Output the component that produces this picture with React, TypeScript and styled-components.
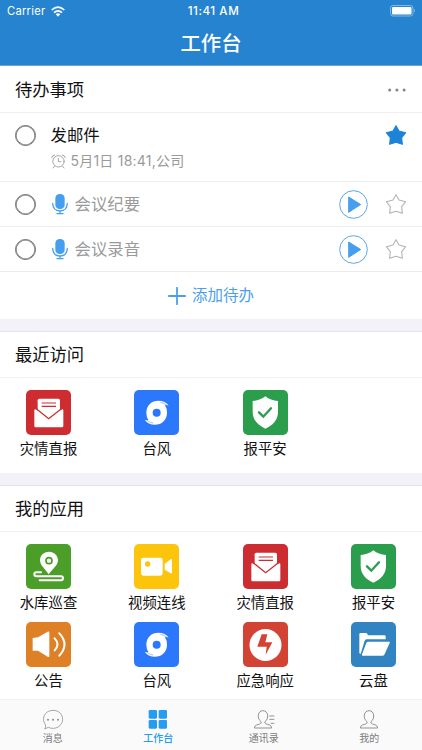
import React from 'react';
import styled, { createGlobalStyle } from 'styled-components';

const GlobalStyle = createGlobalStyle`
  * { box-sizing: border-box; }
  body {
    margin: 0;
    background: #f2f2f8;
    font-family: Inter, "Noto Sans CJK SC", sans-serif;
    color: #111;
  }
  svg { display: block; flex: none; }
`;

const Screen = styled.div`
  display: flex;
  flex-direction: column;
  width: 422px;
  height: 750px;
  overflow: hidden;
`;

const Header = styled.header`
  flex: none;
  height: 66px;
  background: #2583d0;
  border-bottom: 1px solid #6ba4d6;
  color: #fff;
`;

const StatusBar = styled.div`
  display: grid;
  grid-template-columns: 1fr auto 1fr;
  align-items: center;
  height: 22px;
  padding: 0 6px 0 7px;
  font-size: 11.2px;
  line-height: 22px;
`;

const Carrier = styled.div`
  display: flex;
  align-items: center;
  gap: 6px;
  letter-spacing: 0.25px;
`;

const Clock = styled.div`
  font-weight: 500;
  font-size: 11.6px;
  letter-spacing: 0.55px;
  padding-left: 4px;
`;

const Battery = styled.div`
  display: flex;
  justify-content: flex-end;
`;

const PageTitle = styled.h1`
  margin: 0;
  height: 43px;
  line-height: 43px;
  text-align: center;
  font-size: 20.4px;
  font-weight: 500;
`;

const Section = styled.section<{ $first?: boolean }>`
  flex: none;
  background: #fff;
  margin-bottom: 12px;
  border-top: ${(p) => (p.$first ? 'none' : '1px solid #e4e4ea')};
`;

const SectionHead = styled.div`
  display: flex;
  align-items: center;
  justify-content: space-between;
  height: 46px;
  padding: 1px 16px 0 15px;
  border-bottom: 1px solid #f0f0f2;
`;

const SectionTitle = styled.h2`
  margin: 0;
  font-size: 17.3px;
  font-weight: 400;
  line-height: 24px;
`;

const TodoHead = styled(SectionHead)`
  height: 47px;
  padding-top: 2px;
`;

const TodoRow = styled.div<{ $height: number }>`
  display: flex;
  align-items: flex-start;
  height: ${(p) => p.$height}px;
  padding: 0 15px;
  border-bottom: 1px solid #ececee;
`;

const RowLine = styled.div`
  display: flex;
  align-items: center;
  height: 44px;
`;

const Radio = styled.span`
  width: 21px;
  height: 21px;
  border: 1px solid #6c6c6c;
  box-shadow: inset 0 0 0 0.6px #6c6c6c;
  border-radius: 50%;
`;

const TodoBody = styled.div`
  flex: 1;
  margin-left: 14.5px;
`;

const TodoText = styled.span<{ $muted?: boolean }>`
  font-size: 16.4px;
  line-height: 24px;
  color: ${(p) => (p.$muted ? '#9a9a9a' : '#111')};
  margin-left: ${(p) => (p.$muted ? 6 : 0)}px;
`;

const TodoMeta = styled.div`
  display: flex;
  align-items: center;
  gap: 5px;
  height: 18px;
  margin-top: -5px;
  font-size: 14px;
  letter-spacing: 0.22px;
  line-height: 18px;
  color: #9a9a9a;
  white-space: nowrap;
`;

const RowActions = styled.div`
  display: flex;
  align-items: center;
  gap: 17px;
  height: 44px;
`;

const AddRow = styled.div`
  display: flex;
  align-items: center;
  justify-content: center;
  gap: 6px;
  height: 47px;
  font-size: 15.5px;
  line-height: 22px;
  color: #4b9fe8;
`;

const AppGrid = styled.div<{ $bottom: number }>`
  display: grid;
  grid-template-columns: repeat(4, 45px);
  justify-content: space-between;
  row-gap: 12px;
  padding: 12px 26px ${(p) => p.$bottom}px;
`;

const AppItem = styled.div`
  display: flex;
  flex-direction: column;
  align-items: center;
  height: 66px;
`;

const Tile = styled.div<{ $color: string }>`
  flex: none;
  width: 45px;
  height: 45px;
  border-radius: 5px;
  background: ${(p) => p.$color};
`;

const AppLabel = styled.span`
  margin-top: 4px;
  font-size: 14.4px;
  line-height: 20px;
  white-space: nowrap;
`;

const Apps = styled(Section)`
  flex: 1;
  margin-bottom: 0;
`;

const TabBar = styled.nav`
  flex: none;
  display: grid;
  grid-template-columns: repeat(4, 1fr);
  height: 51px;
  background: #fafafa;
  border-top: 1px solid #f0f0f0;
`;

const Tab = styled.div<{ $active?: boolean }>`
  display: flex;
  flex-direction: column;
  align-items: center;
  padding-top: 9px;
  font-size: 10px;
  line-height: 15px;
  font-weight: ${(p) => (p.$active ? 500 : 400)};
  color: ${(p) => (p.$active ? '#229bf0' : '#7c7c7c')};
  svg { margin-bottom: 1px; }
`;

const WifiIcon = () => (
  <svg width="14" height="11" viewBox="0 0 42 33" fill="none" stroke="#fff" strokeWidth="5">
    <path d="M2 12 Q21 -5 40 12" />
    <path d="M9 20 Q21 9 33 20" />
    <path d="M14 25 Q21 19 28 25 L21 32Z" fill="#fff" stroke="none" />
  </svg>
);

const BatteryIcon = () => (
  <svg width="26" height="12" viewBox="0 0 26 12">
    <rect x="0.5" y="0.5" width="22.5" height="10.5" rx="2.5" fill="none" stroke="#84b8e4" />
    <rect x="2" y="2" width="19.5" height="7.5" rx="1" fill="#fff" />
    <path d="M24 4 Q26 5.7 24 7.5Z" fill="#84b8e4" />
  </svg>
);

const DotsIcon = () => (
  <svg width="18" height="4" viewBox="0 0 18 4" fill="#858585">
    <circle cx="1.7" cy="2" r="1.5" />
    <circle cx="8.9" cy="2" r="1.5" />
    <circle cx="16.1" cy="2" r="1.5" />
  </svg>
);

const StarIcon = ({ filled }: { filled?: boolean }) => (
  <svg width="22" height="22" viewBox="0 0 66 66">
    <path
      d="M33 5 L42 21 L62 26 L50 41 L52 61 L33 55 L14 61 L16 41 L4 26 L24 21Z"
      fill={filled ? '#1d83d8' : 'none'}
      stroke={filled ? '#1d83d8' : '#b4b4b4'}
      strokeWidth="3.3"
      strokeLinejoin="round"
    />
  </svg>
);

const PlayIcon = () => (
  <svg width="29" height="29" viewBox="0 0 87 87">
    <circle cx="43.5" cy="43.5" r="41.5" fill="none" stroke="#5aa6e6" strokeWidth="3" />
    <path d="M29 21 L65 43.5 L29 67Z" fill="#459fee" stroke="#459fee" strokeWidth="3" strokeLinejoin="round" />
  </svg>
);

const MicIcon = () => (
  <svg width="18" height="22" viewBox="0 0 54 66" fill="none" stroke="#459fee" strokeWidth="3.8">
    <rect x="13" y="3" width="28" height="45" rx="13" fill="#459fee" stroke="none" />
    <path d="M5 31 Q6 54 27 54 Q48 54 49 31 M27 54 V62 M18 62 H36" strokeLinecap="round" />
  </svg>
);

const AlarmIcon = () => (
  <svg width="15" height="15" viewBox="0 0 45 45" fill="none" stroke="#9c9c9c" strokeWidth="2.8" strokeLinecap="round">
    <circle cx="22.5" cy="22" r="17" />
    <path d="M22 13 V23 H30 M10 37 L6 42 M35 37 L39 42 M2 11 Q3 4 11 3 M34 3 Q42 4 43 11" />
  </svg>
);

const PlusIcon = () => (
  <svg width="18" height="18" viewBox="0 0 18 18" stroke="#4b9fe8" strokeWidth="1.8" strokeLinecap="round">
    <path d="M9 0.8 V17.2 M0.8 9 H17.2" />
  </svg>
);

type GlyphName = 'mail' | 'typhoon' | 'shield' | 'route' | 'video' | 'speaker' | 'bolt' | 'folder';

const tileColors: Record<GlyphName, string> = {
  mail: '#cd2d30',
  typhoon: '#2b78fc',
  shield: '#2a9e4c',
  route: '#4b9f28',
  video: '#fdc40c',
  speaker: '#de8126',
  bolt: '#d24334',
  folder: '#3183c1',
};

const glyphs: Record<GlyphName, React.ReactNode> = {
  mail: (
    <>
      <rect x="35" y="26" width="67" height="60" rx="5" fill="#fff" />
      <path d="M47 39 H90 M47 49 H90" stroke="#cd2d30" strokeWidth="3.5" />
      <path d="M25 61 Q25 55 32 59 L68 86 L105 59 Q112 55 112 61 V108 Q112 112 108 112 H29 Q25 112 25 108Z" fill="#fff" />
      <path d="M29 55 L68 86 L108 55" fill="none" stroke="#cd2d30" strokeWidth="4" />
    </>
  ),
  typhoon: (
    <>
      <path
        d="M37 68 C37 46 53 32 73 32 C87 32 97 37 104 47 C99 45 96 45 93 46 Q99 55 99 68 C99 90 83 104 63 104 C49 104 39 99 32 89 C37 91 40 91 43 90 Q37 81 37 68Z"
        fill="#fff"
      />
      <path
        d="M80 37 Q90 39 96 44 M56 99 Q46 97 40 92"
        fill="none"
        stroke="#2b78fc"
        strokeWidth="1.4"
        strokeLinecap="round"
      />
      <circle cx="68" cy="68" r="12" fill="#2b78fc" />
    </>
  ),
  shield: (
    <>
      <path d="M67 19 Q83 32 105 33 V66 C105 90 90 105 67 116 C44 105 29 90 29 66 V33 Q51 32 67 19Z" fill="#fff" />
      <path d="M48 67 L61 80 L84 55" fill="none" stroke="#2a9e4c" strokeWidth="7" strokeLinecap="round" />
    </>
  ),
  route: (
    <>
      <path d="M69 23 C53 23 42 35 42 49 C42 64 59 77 68 91 C78 77 96 64 96 49 C96 35 84 23 69 23Z" fill="#fff" />
      <circle cx="69" cy="50" r="9" fill="none" stroke="#4b9f28" strokeWidth="5" />
      <path
        d="M45 85 H31 Q25 85 25 91 Q25 97 31 97 H105 Q111 97 111 103 Q111 109 105 109 H41"
        fill="none"
        stroke="#fff"
        strokeWidth="6"
        strokeLinecap="round"
      />
    </>
  ),
  video: (
    <>
      <rect x="21" y="41" width="65" height="54" rx="7" fill="#fff" />
      <circle cx="41" cy="60" r="8" fill="#fdc40c" />
      <path d="M92 60 L110 46 Q114 44 114 48 V86 Q114 90 110 88 L92 77Z" fill="#fff" />
    </>
  ),
  speaker: (
    <>
      <path d="M20 48 L36 46 L65 29 Q70 27 70 32 V102 Q70 107 65 104 L36 86 H20Z" fill="#fff" />
      <path d="M86 49 Q103 67 86 85 M100 34 Q131 67 100 101" fill="none" stroke="#fff" strokeWidth="6" strokeLinecap="round" />
    </>
  ),
  bolt: (
    <>
      <circle cx="67.5" cy="69" r="48" fill="#fff" />
      <path d="M56 37 H73 L67 61 H88 L68 98 L71 74 H43Z" fill="#d24334" />
    </>
  ),
  folder: (
    <>
      <path d="M25 94 V36 Q25 33 28 33 H45 Q48 33 49 36 L51 40 H100 Q104 40 104 44 V52 H48 Q43 52 41 56 L29 96Z" fill="#fff" />
      <path d="M51 59 H114 Q118 59 116 63 L100 98 Q98 101 95 101 H35 Q31 101 33 97 L46 63 Q48 59 51 59Z" fill="#fff" />
    </>
  ),
};

const AppEntry = ({ icon, label }: { icon: GlyphName; label: string }) => (
  <AppItem>
    <Tile $color={tileColors[icon]}>
      <svg width="45" height="45" viewBox="0 0 135 135">
        {glyphs[icon]}
      </svg>
    </Tile>
    <AppLabel>{label}</AppLabel>
  </AppItem>
);

const ChatIcon = () => (
  <svg width="22" height="21" viewBox="0 0 66 63" fill="none" stroke="#9a9a9a" strokeWidth="2.6">
    <path d="M11 48 C-2 33 4 5 33 4 C51 4 62 17 62 31 C62 50 40 65 19 55 L8 60 Q12 54 11 48Z" />
    <g fill="#8c8c8c" stroke="none">
      <circle cx="18" cy="32" r="3" />
      <circle cx="33" cy="32" r="3" />
      <circle cx="48" cy="32" r="3" />
    </g>
  </svg>
);

const GridIcon = () => (
  <svg width="20" height="21" viewBox="0 0 60 63" fill="#259cf1">
    <rect x="2" y="3" width="25" height="26" rx="4" />
    <rect x="32" y="3" width="25" height="26" rx="4" />
    <rect x="2" y="33" width="25" height="26" rx="4" />
    <rect x="32" y="33" width="25" height="26" rx="4" />
  </svg>
);

const personPath =
  'M25 39 C17 33 15 25 16 18 C17 10 23 5 30 5 C38 5 43 11 44 18 C45 26 42 34 35 39 C36 45 43 46 50 48 Q56 51 56 57 H4 Q4 51 10 48 C18 46 24 45 25 39Z';

const PersonIcon = () => (
  <svg width="20" height="21" viewBox="0 0 60 63" fill="none" stroke="#929292" strokeWidth="3" strokeLinejoin="round">
    <path d={personPath} />
  </svg>
);

const ContactsIcon = () => (
  <svg width="22" height="21" viewBox="0 0 66 63" fill="none" stroke="#929292" strokeWidth="3" strokeLinejoin="round">
    <path d={personPath} />
    <path d="M49 21 H64 M49 31 H64 M53 43 H64" />
  </svg>
);

const App = () => (
  <>
    <GlobalStyle />
    <Screen>
      <Header>
        <StatusBar>
          <Carrier>
            Carrier
            <WifiIcon />
          </Carrier>
          <Clock>11:41 AM</Clock>
          <Battery>
            <BatteryIcon />
          </Battery>
        </StatusBar>
        <PageTitle>工作台</PageTitle>
      </Header>

      <Section $first>
        <TodoHead>
          <SectionTitle>待办事项</SectionTitle>
          <DotsIcon />
        </TodoHead>
        <TodoRow $height={69}>
          <RowLine>
            <Radio />
          </RowLine>
          <TodoBody>
            <RowLine>
              <TodoText>发邮件</TodoText>
            </RowLine>
            <TodoMeta>
              <AlarmIcon />
              5月1日 18:41,公司
            </TodoMeta>
          </TodoBody>
          <RowActions>
            <StarIcon filled />
          </RowActions>
        </TodoRow>
        {['会议纪要', '会议录音'].map((text) => (
          <TodoRow $height={45} key={text}>
            <RowLine>
              <Radio />
            </RowLine>
            <TodoBody>
              <RowLine>
                <MicIcon />
                <TodoText $muted>{text}</TodoText>
              </RowLine>
            </TodoBody>
            <RowActions>
              <PlayIcon />
              <StarIcon />
            </RowActions>
          </TodoRow>
        ))}
        <AddRow>
          <PlusIcon />
          添加待办
        </AddRow>
      </Section>

      <Section>
        <SectionHead>
          <SectionTitle>最近访问</SectionTitle>
        </SectionHead>
        <AppGrid $bottom={17}>
          <AppEntry icon="mail" label="灾情直报" />
          <AppEntry icon="typhoon" label="台风" />
          <AppEntry icon="shield" label="报平安" />
        </AppGrid>
      </Section>

      <Apps>
        <SectionHead>
          <SectionTitle>我的应用</SectionTitle>
        </SectionHead>
        <AppGrid $bottom={0}>
          <AppEntry icon="route" label="水库巡查" />
          <AppEntry icon="video" label="视频连线" />
          <AppEntry icon="mail" label="灾情直报" />
          <AppEntry icon="shield" label="报平安" />
          <AppEntry icon="speaker" label="公告" />
          <AppEntry icon="typhoon" label="台风" />
          <AppEntry icon="bolt" label="应急响应" />
          <AppEntry icon="folder" label="云盘" />
        </AppGrid>
      </Apps>

      <TabBar>
        <Tab>
          <ChatIcon />
          消息
        </Tab>
        <Tab $active>
          <GridIcon />
          工作台
        </Tab>
        <Tab>
          <ContactsIcon />
          通讯录
        </Tab>
        <Tab>
          <PersonIcon />
          我的
        </Tab>
      </TabBar>
    </Screen>
  </>
);

export default App;
